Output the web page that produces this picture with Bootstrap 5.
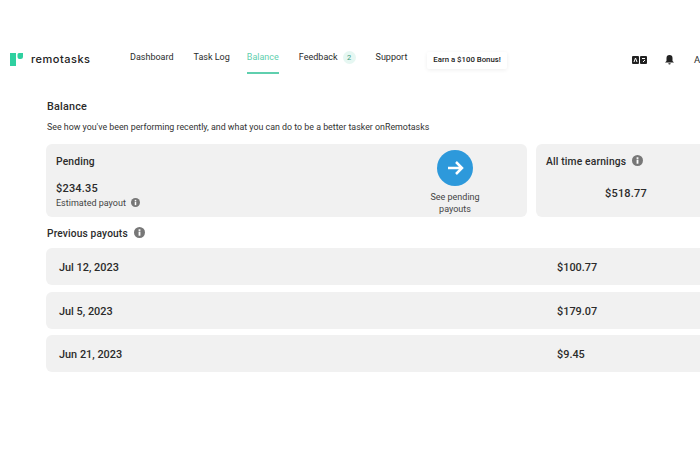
<!DOCTYPE html>
<html lang="en">
	<head>
		<meta charset="UTF-8" />
		<title>Remotasks Balance</title>
		<link href="https://cdn.jsdelivr.net/npm/bootstrap@5.3.0/dist/css/bootstrap.min.css" rel="stylesheet" />
		<style>
			html, body { height: 450px; overflow: hidden; }
			body { width: 760px; font-family: Roboto, "Noto Sans", sans-serif; color: #2b2b2b; background: #fff; }

			.top-bar { height: 74px; padding: 40px 0 0 10px; }
			.logo-word { width: 120px; height: 34px; padding-top: 4px; font-family: Inter, sans-serif; font-size: 11px; font-weight: 500; letter-spacing: .5px; color: #222; line-height: 1; }
			.logo-word svg { margin-right: 8px; }
			.main-link { display: block; height: 34px; font-size: 9px; line-height: 34px; color: #2b2b2b; text-decoration: none; white-space: nowrap; }
			.main-link.on { color: #5fcfae; border-bottom: 2px solid #5fcfae; }
			.count-pill { display: inline-block; width: 13px; height: 13px; margin-left: 5px; border-radius: 50%; background: #e6f7f2; color: #3a9b7e; font-size: 7.5px; line-height: 13px; text-align: center; }
			.link-gap { margin-left: 20px; }
			.link-gap.tight { margin-left: 17px; }
			.bonus-box { margin-top: 7px; padding: 3px 6px 4px; font-size: 7.8px; font-weight: 500; line-height: 10px; color: #222; box-shadow: 0 1px 4px rgba(0,0,0,.07); border-radius: 2px; white-space: nowrap; }
			.bonus-wrap { height: 34px; margin-left: 20px; }
			.nav-right { height: 34px; margin-left: 125px; margin-top: 3px; }
			.nav-right span { font-size: 9.5px; margin-left: 20px; }
			.nav-right svg + svg { margin-left: 18px; }

			.page-body { padding: 26px 0 0 46px; }
			.page-title { font-size: 10.8px; font-weight: 500; line-height: 14px; margin: 0 0 7px 1px; letter-spacing: .2px; }
			.page-sub { font-size: 8.85px; line-height: 12px; margin: 0 0 11px 1px; color: #333; }
			.grey-box { background: #f1f1f1; border-radius: 6px; }
			.pending-box { width: 481px; height: 73px; padding: 11px 0 0 10px; }
			.alltime-box { width: 200px; height: 73px; padding: 11px 0 0 10px; }
			.box-head { font-size: 10.3px; font-weight: 500; line-height: 14px; letter-spacing: .15px; }
			.box-amount { font-size: 11px; font-weight: 500; line-height: 14px; margin-top: 13px; letter-spacing: .2px; }
			.box-note { font-size: 9px; line-height: 12px; margin-top: 1px; color: #444; }
			.see-link { width: 74px; margin-right: 35px; font-size: 9px; line-height: 11.5px; text-align: center; color: #444; margin-top: -5px; }
			.round-arrow { display: block; width: 36px; height: 36px; margin: 0 auto 6px; border-radius: 50%; background: #2d99db; }
			.alltime-amount { width: 160px; margin-top: 18px; text-align: center; font-size: 11px; font-weight: 500; line-height: 14px; letter-spacing: .2px; }
			.info-dot { display: inline-block; vertical-align: -1px; margin-left: 3px; }
			.prev-title { font-size: 10.2px; font-weight: 500; line-height: 14px; margin: 10px 0 7px 1px; letter-spacing: .15px; }
			.pay-row { width: 700px; height: 37px; margin-bottom: 6.5px; padding-left: 13px; font-size: 10.9px; font-weight: 500; line-height: 39px; border-radius: 6px 0 0 6px; }
			.pay-date { width: 498px; }
		</style>
	</head>
	<body>
		<nav class="top-bar d-flex">
			<div class="logo-word d-flex align-items-center">
				<svg width="13" height="13" viewBox="0 0 13 13"><rect x="0" y="0" width="6" height="13" fill="#2fd0a0"/><path d="M9 0H13V3.500A2.500 2.500 0 0 1 10.500 6H9.500A2 2 0 0 1 7.500 4V1.500A1.500 1.500 0 0 1 9 0z" fill="#2fd0a0"/></svg>
				<span>remotasks</span>
			</div>
			<ul class="nav flex-nowrap">
				<li class="nav-item"><a class="main-link" href="#">Dashboard</a></li>
				<li class="nav-item link-gap"><a class="main-link" href="#">Task Log</a></li>
				<li class="nav-item link-gap tight"><a class="main-link on" href="#">Balance</a></li>
				<li class="nav-item link-gap"><a class="main-link" href="#">Feedback<span class="count-pill">2</span></a></li>
				<li class="nav-item link-gap"><a class="main-link" href="#">Support</a></li>
			</ul>
			<div class="bonus-wrap d-flex align-items-center"><div class="bonus-box">Earn a $100 Bonus!</div></div>
			<div class="nav-right d-flex align-items-center">
				<svg width="15" height="8" viewBox="0 0 15 8"><rect width="7" height="8" rx="1" fill="#222"/><rect x="8" width="7" height="8" rx="1" fill="#222"/><path d="M2 6l1.500-4 1.500 4M10 2.500h3M11 6l2-2" stroke="#fff" fill="none"/></svg>
				<svg width="9" height="10" viewBox="0 0 9 10"><path d="M4.500 0a3 3 0 0 1 3 3v3l1.500 1.500H0L1.500 6V3a3 3 0 0 1 3-3zM3.300 8.300h2.400a1.200 1.200 0 0 1-2.400 0z" fill="#222"/></svg>
				<span>As</span>
			</div>
		</nav>

		<main class="page-body">
			<h1 class="page-title">Balance</h1>
			<p class="page-sub">See how you've been performing recently, and what you can do to be a better tasker onRemotasks</p>

			<div class="d-flex" style="gap:9px">
				<div class="grey-box pending-box d-flex justify-content-between">
					<div>
						<div class="box-head">Pending</div>
						<div class="box-amount">$234.35</div>
						<div class="box-note">Estimated payout
							<svg class="info-dot" width="9" height="9" viewBox="0 0 12 12"><circle cx="6" cy="6" r="6" fill="#777"/><rect x="5" y="5" width="2" height="4.500" fill="#fff"/><rect x="5" y="2.500" width="2" height="1.800" fill="#fff"/></svg>
						</div>
					</div>
					<div class="see-link">
						<span class="round-arrow"><svg width="36" height="36" viewBox="0 0 36 36"><path d="M11 18h14M19 12l6 6-6 6" stroke="#fff" stroke-width="2.500" fill="none"/></svg></span>
						See pending payouts
					</div>
				</div>
				<div class="grey-box alltime-box">
					<div class="box-head">All time earnings
						<svg class="info-dot" width="11" height="11" viewBox="0 0 12 12"><circle cx="6" cy="6" r="6" fill="#777"/><rect x="5" y="5" width="2" height="4.500" fill="#fff"/><rect x="5" y="2.500" width="2" height="1.800" fill="#fff"/></svg>
					</div>
					<div class="alltime-amount">$518.77</div>
				</div>
			</div>

			<div class="prev-title">Previous payouts
				<svg class="info-dot" width="11" height="11" viewBox="0 0 12 12"><circle cx="6" cy="6" r="6" fill="#777"/><rect x="5" y="5" width="2" height="4.500" fill="#fff"/><rect x="5" y="2.500" width="2" height="1.800" fill="#fff"/></svg>
			</div>

			<div class="grey-box pay-row d-flex"><div class="pay-date">Jul 12, 2023</div><div>$100.77</div></div>
			<div class="grey-box pay-row d-flex"><div class="pay-date">Jul 5, 2023</div><div>$179.07</div></div>
			<div class="grey-box pay-row d-flex"><div class="pay-date">Jun 21, 2023</div><div>$9.45</div></div>
		</main>
	</body>
</html>
